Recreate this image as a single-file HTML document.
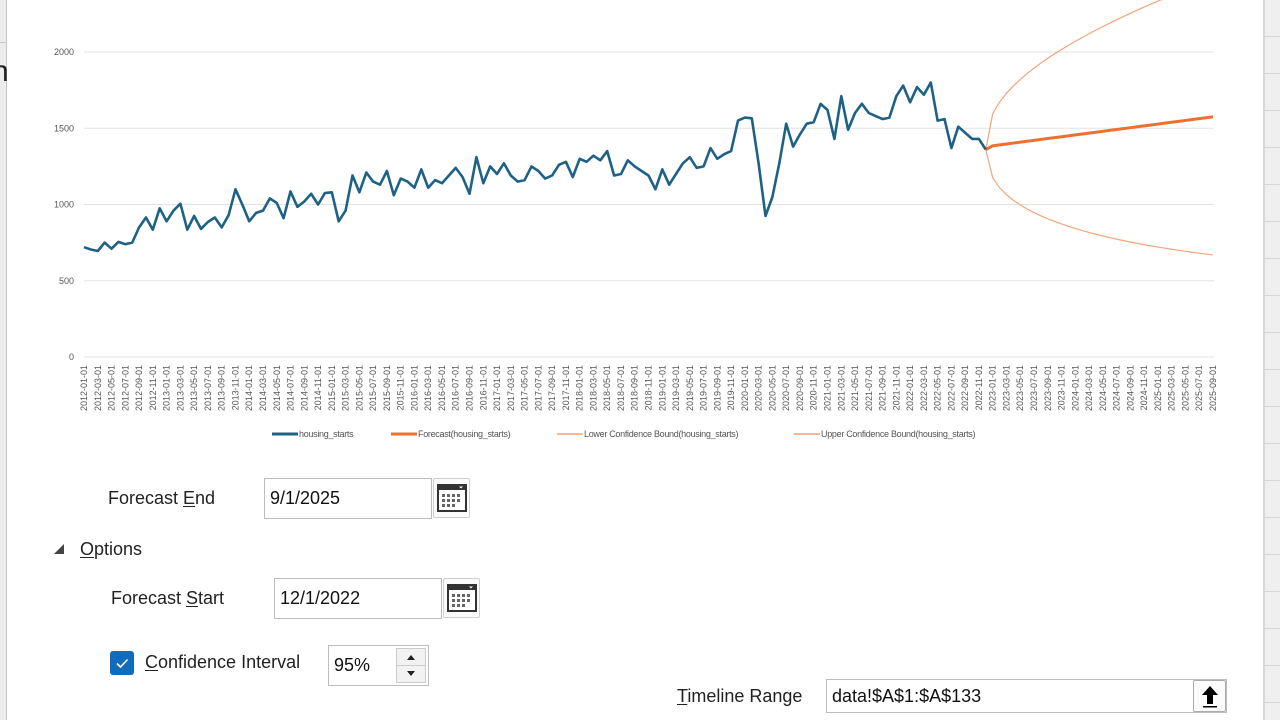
<!DOCTYPE html>
<html><head><meta charset="utf-8"><style>
*{margin:0;padding:0;box-sizing:border-box}
body{width:1280px;height:720px;overflow:hidden;background:#fff;position:relative;font-family:"Liberation Sans",sans-serif}
.l{position:absolute;font-size:18px;color:#222;white-space:nowrap}
.inp{position:absolute;border:1px solid #bdbdbd;background:#fff;font-size:18px;color:#111;padding-left:5px;display:flex;align-items:center}
.btn{position:absolute;border:1px solid #d0d0d0;border-radius:2px;background:#fbfbfb;display:flex;align-items:center;justify-content:center}
u{text-decoration:underline;text-underline-offset:2px}
</style></head><body>
<div style="position:absolute;left:0;top:0;width:7px;height:720px;background:#ececec;border-right:1px solid #c8c8c8"></div>
<div style="position:absolute;left:0;top:42px;width:7px;height:1px;background:#c8c8c8"></div>
<div class="l" style="left:-8px;top:55px;font-size:30px">n</div>
<div style="position:absolute;left:1263px;top:0;width:17px;height:720px;background:#efefef;border-left:2px solid #d8d8d8;background-image:repeating-linear-gradient(to bottom,transparent 0,transparent 36px,#d6d6d6 36px,#d6d6d6 37px)"></div>
<svg id="ch" width="1262" height="460" style="position:absolute;left:0;top:0" font-family="Liberation Sans, sans-serif"></svg>
<div class="l" style="left:108px;top:488px">Forecast <u>E</u>nd</div>
<div class="inp" style="left:264px;top:478px;width:168px;height:41px">9/1/2025</div>
<div class="btn" style="left:433px;top:478px;width:37px;height:40px"><svg width="30" height="28" viewBox="0 0 30 28"><rect x="1" y="1" width="28" height="26" fill="#fff" stroke="#333" stroke-width="2"/><rect x="1" y="1" width="28" height="5" fill="#333"/><path d="M22 2.5h4l-2 2z" fill="#fff"/><g fill="#666"><rect x="5" y="10" width="3" height="3"/><rect x="10" y="10" width="3" height="3"/><rect x="15" y="10" width="3" height="3"/><rect x="20" y="10" width="3" height="3"/><rect x="5" y="15" width="3" height="3"/><rect x="10" y="15" width="3" height="3"/><rect x="15" y="15" width="3" height="3"/><rect x="20" y="15" width="3" height="3"/><rect x="5" y="20" width="3" height="3"/><rect x="10" y="20" width="3" height="3"/><rect x="15" y="20" width="3" height="3"/></g></svg></div>
<svg style="position:absolute;left:53px;top:543px" width="12" height="12"><path d="M11 1V11H1z" fill="#444"/></svg>
<div class="l" style="left:80px;top:539px"><u>O</u>ptions</div>
<div class="l" style="left:111px;top:588px">Forecast <u>S</u>tart</div>
<div class="inp" style="left:274px;top:578px;width:168px;height:41px">12/1/2022</div>
<div class="btn" style="left:443px;top:578px;width:37px;height:40px"><svg width="30" height="28" viewBox="0 0 30 28"><rect x="1" y="1" width="28" height="26" fill="#fff" stroke="#333" stroke-width="2"/><rect x="1" y="1" width="28" height="5" fill="#333"/><path d="M22 2.5h4l-2 2z" fill="#fff"/><g fill="#666"><rect x="5" y="10" width="3" height="3"/><rect x="10" y="10" width="3" height="3"/><rect x="15" y="10" width="3" height="3"/><rect x="20" y="10" width="3" height="3"/><rect x="5" y="15" width="3" height="3"/><rect x="10" y="15" width="3" height="3"/><rect x="15" y="15" width="3" height="3"/><rect x="20" y="15" width="3" height="3"/><rect x="5" y="20" width="3" height="3"/><rect x="10" y="20" width="3" height="3"/><rect x="15" y="20" width="3" height="3"/></g></svg></div>
<div style="position:absolute;left:110px;top:651px;width:24px;height:24px;background:#0f6cbd;border-radius:3px"><svg width="24" height="24"><path d="M7 12.5l3.5 3.5 7-7.5" stroke="#fff" stroke-width="1.6" fill="none"/></svg></div>
<div class="l" style="left:145px;top:652px"><u>C</u>onfidence Interval</div>
<div class="inp" style="left:328px;top:645px;width:101px;height:41px">95%</div>
<div style="position:absolute;left:396px;top:648px;width:30px;height:35px;border:1px solid #ccc;background:#f2f2f2"><div style="height:17px;border-bottom:1px solid #ccc;position:relative"><svg width="28" height="16"><path d="M10 11h8l-4-5z" fill="#222"/></svg></div><svg width="28" height="16"><path d="M10 5h8l-4 5z" fill="#222"/></svg></div>
<div class="l" style="left:677px;top:686px"><u>T</u>imeline Range</div>
<div class="inp" style="left:826px;top:679px;width:401px;height:34px">data!$A$1:$A$133</div>
<div class="btn" style="left:1193px;top:680px;width:33px;height:32px;border-color:#aaa"><svg width="26" height="26"><path d="M13 3L5 12h5v9h6v-9h5z" fill="#000"/><rect x="6" y="23" width="14" height="1.5" fill="#000"/></svg></div>
<script>
var d=[720,705,695,750,710,755,740,750,850,915,835,975,890,960,1005,835,925,840,885,915,850,930,1100,1000,890,945,960,1040,1010,910,1085,985,1020,1070,1000,1075,1080,890,960,1190,1080,1210,1150,1130,1220,1060,1170,1150,1110,1230,1110,1160,1140,1190,1240,1180,1070,1310,1140,1250,1200,1270,1190,1150,1160,1250,1220,1170,1190,1260,1280,1180,1300,1280,1320,1290,1350,1190,1200,1290,1250,1220,1190,1100,1230,1130,1200,1270,1310,1240,1250,1370,1300,1330,1350,1550,1570,1565,1270,925,1050,1270,1530,1380,1460,1530,1540,1660,1620,1430,1710,1490,1600,1660,1600,1580,1560,1570,1710,1780,1670,1770,1720,1800,1550,1560,1370,1510,1470,1430,1430,1360];
var X=i=>84+i*(1129/164),Y=v=>357-v*0.1525,s='';
[0,500,1000,1500,2000].forEach(v=>{s+=`<line x1="84" x2="1214" y1="${Y(v)}" y2="${Y(v)}" stroke="#e3e3e3" stroke-width="1"/><text x="74" y="${Y(v)+3}" font-size="9" fill="#555" text-anchor="end">${v}</text>`});
for(var i=0;i<165;i+=2){var yr=2012+Math.floor(i/12),m=i%12+1;s+=`<text transform="translate(${X(i)+3},365) rotate(-90)" font-size="9" fill="#555" text-anchor="end">${yr}-${m<10?'0'+m:m}-01</text>`}
var p=d.map((v,i)=>X(i).toFixed(1)+','+Y(v).toFixed(1)).join(' ');
var f=[],lo=[],up=[];
for(var i=131;i<=164;i++){var h=i-131,fv=1360+(h?25+190*(h-1)/32:0),k=h?210*Math.pow(h,0.418):0;f.push(X(i)+','+Y(fv));lo.push(X(i)+','+Y(fv-k));up.push(X(i)+','+Y(fv+k))}
s+=`<polyline points="${up.join(' ')}" fill="none" stroke="#f4a57a" stroke-width="1.2"/><polyline points="${lo.join(' ')}" fill="none" stroke="#f4a57a" stroke-width="1.2"/><polyline points="${f.join(' ')}" fill="none" stroke="#ed7030" stroke-width="3"/><polyline points="${p}" fill="none" stroke="#1d6286" stroke-width="2.6" stroke-linejoin="round"/>`;
[[272,'#1d6286',3,'housing_starts'],[391,'#ed7030',3,'Forecast(housing_starts)'],[557,'#f7b896',2,'Lower Confidence Bound(housing_starts)'],[794,'#f7b896',2,'Upper Confidence Bound(housing_starts)']].forEach(a=>{s+=`<line x1="${a[0]}" x2="${a[0]+26}" y1="434" y2="434" stroke="${a[1]}" stroke-width="${a[2]}"/><text x="${a[0]+27}" y="437" font-size="9" fill="#555" letter-spacing="-0.3">${a[3]}</text>`});
document.getElementById('ch').innerHTML=s;
</script>
</body></html>
